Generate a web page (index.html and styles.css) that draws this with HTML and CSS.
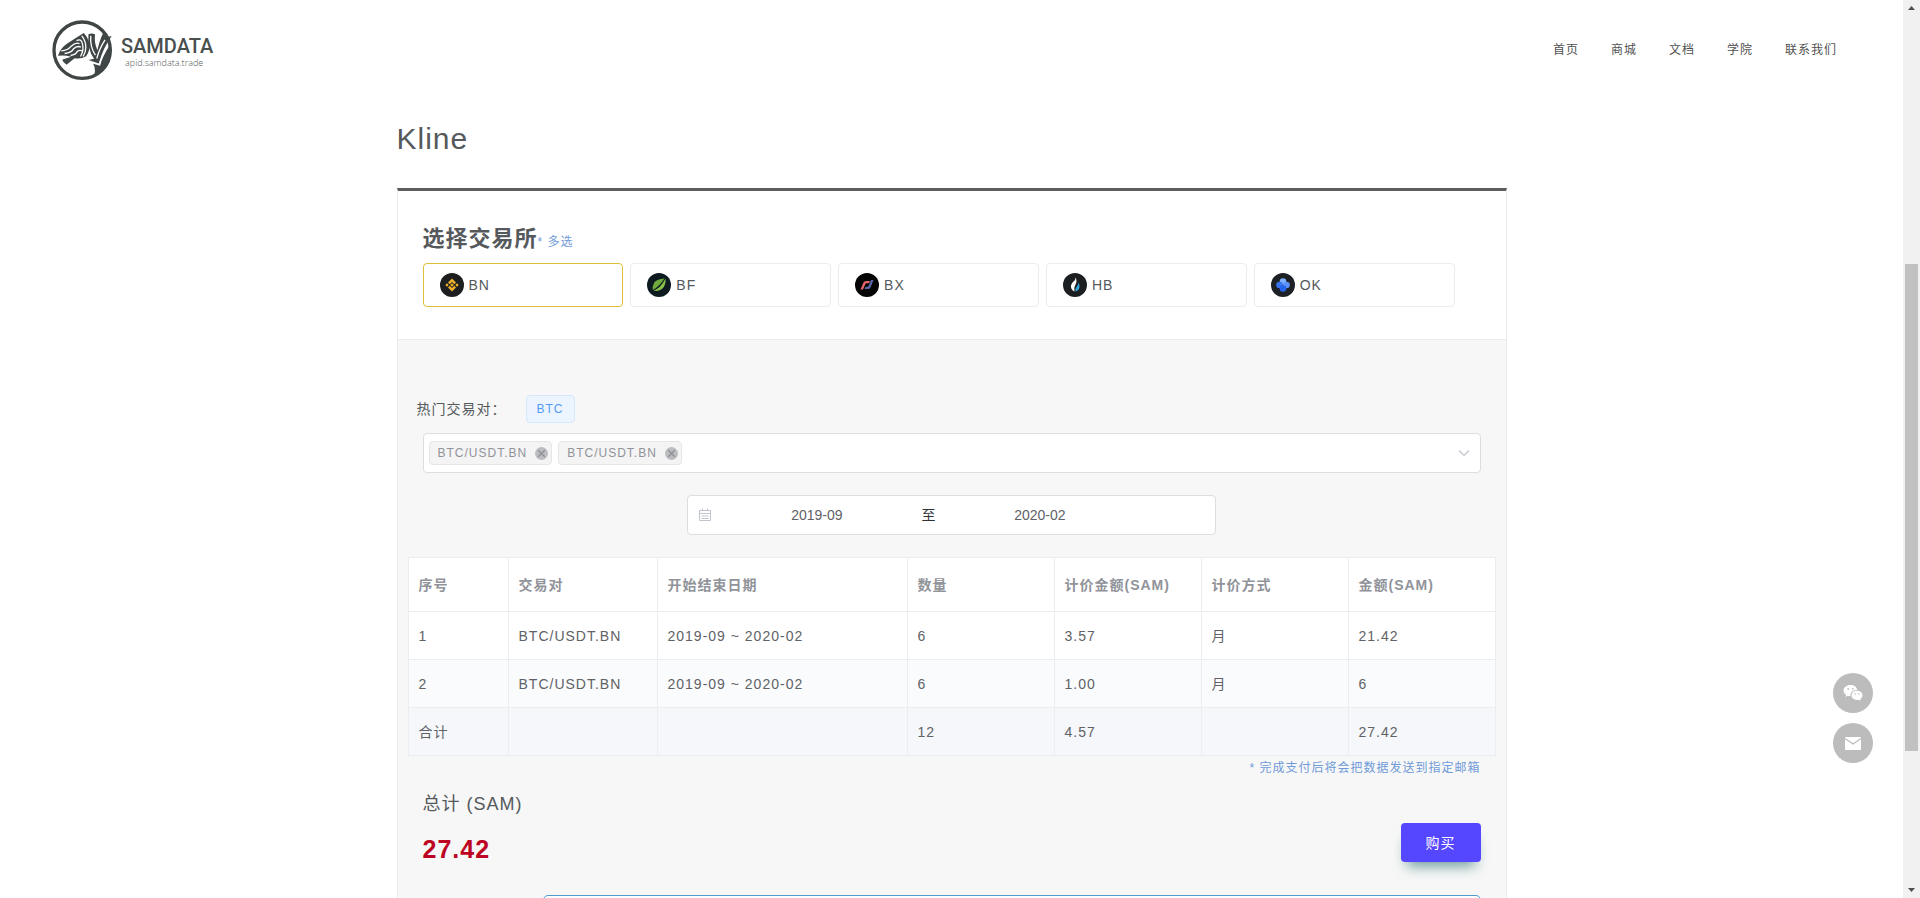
FILE: index.html
```html
<!DOCTYPE html>
<html lang="zh-CN">
<head>
<meta charset="utf-8">
<title>SAMDATA - Kline</title>
<link rel="stylesheet" href="styles.css">
</head>
<body>
<div class="page">
  <header class="site-header">
    <a class="brand" href="#">
      <svg class="brand-mark" viewBox="36 28 184 184" aria-hidden="true">
        <circle cx="127" cy="119" r="85" fill="#fff" stroke="#3f4645" stroke-width="10"/>
        <path fill="#3f4645" d="M54 136 Q62 112 82 99 Q104 84 132 67 Q144 80 148 94 Q152 120 139 137 Q122 147 104 143 L80 163 Q66 152 68 147 L94 139 Q74 133 54 136Z"/>
        <path fill="none" stroke="#fff" stroke-width="4" d="M64 121 Q84 120 94 107 Q108 94 119 99 M74 129 Q96 127 101 115 Q112 104 123 110 M92 135 Q108 133 112 123 Q120 117 127 121 M110 90 Q124 84 127 97 Q134 118 122 138 M126 76 Q138 92 138 110 Q138 126 130 138"/>
        <path fill="#3f4645" d="M146 71 Q157 66 166 72 Q162 96 173 119 Q180 88 190 68 L200 80 L216 76 Q190 112 177 159 L146 149 L163 145 Q142 118 146 71Z"/>
        <path fill="none" stroke="#fff" stroke-width="4" d="M153 76 Q150 110 167 134 M196 88 Q180 112 171 144"/>
        <path fill="#3f4645" d="M160 160 L181 166 Q188 138 213 100 Q222 150 190 182 Q178 194 162 200 Q170 176 160 160Z"/>
      </svg>
      <span class="brand-text">
        <span class="brand-name">SAMDATA</span>
        <span class="brand-url">apid.samdata.trade</span>
      </span>
    </a>
    <nav class="site-nav">
      <a href="#">首页</a>
      <a href="#">商城</a>
      <a href="#">文档</a>
      <a href="#">学院</a>
      <a href="#">联系我们</a>
    </nav>
  </header>

  <main class="container">
    <h1 class="page-title">Kline</h1>
    <div class="card">
      <section class="exchanges">
        <h2 class="section-title">选择交易所<small class="hint">* 多选</small></h2>
        <div class="exchange-list">
          <label class="exchange">
            <input type="checkbox" class="exchange-input" checked>
            <svg class="coin" viewBox="0 0 24 24" aria-hidden="true"><circle cx="12" cy="12" r="12" fill="#1d1e20"/><g fill="#efb02b"><path d="M12 5.500l4 4-1.700 1.700-2.300-2.300-2.300 2.300-1.700-1.700zM12 18.500l4-4-1.700-1.700-2.300 2.300-2.300-2.300-1.700 1.700zM7 10.300l1.700 1.700L7 13.700 5.300 12zM17 10.300l1.700 1.700-1.700 1.700-1.700-1.700zM12 10.200l1.800 1.800-1.800 1.800-1.800-1.800z"/></g></svg>
            <span>BN</span>
          </label>
          <label class="exchange">
            <input type="checkbox" class="exchange-input">
            <svg class="coin" viewBox="0 0 24 24" aria-hidden="true"><circle cx="12" cy="12" r="12" fill="#0d1a20"/><path fill="#8bc34a" d="M18.500 5.500Q19 12 15.500 15.500Q12 19 6.500 17.500Q13.500 15.500 18.500 5.500Z"/><path fill="#6fa83c" d="M17.500 5.500Q9 6 7 10Q5.200 13.500 5.800 17Q12.500 13.500 17.500 5.500Z"/></svg>
            <span>BF</span>
          </label>
          <label class="exchange">
            <input type="checkbox" class="exchange-input">
            <svg class="coin" viewBox="0 0 24 24" aria-hidden="true"><circle cx="12" cy="12" r="12" fill="#050506"/><path fill="#e8666b" d="M5.500 16.500L8.500 9.500Q9.300 8 11 8H15L13.800 10.200H11.500Q10.800 10.200 10.300 11.200L8 16.500Z"/><path fill="#5a67a8" d="M18.500 7L15.500 14.500Q14.800 16 13 16H9.500L10.700 13.800H12.500Q13.200 13.800 13.600 12.800L16 7Z"/></svg>
            <span>BX</span>
          </label>
          <label class="exchange">
            <input type="checkbox" class="exchange-input">
            <svg class="coin" viewBox="0 0 24 24" aria-hidden="true"><circle cx="12" cy="12" r="12" fill="#1c1f22"/><path fill="#fff" d="M12.500 4.500Q14.500 8 12.500 11.500Q10.500 15 11.500 18.500Q7.500 16.500 8 12.500Q8.600 9.500 11 8Q12.500 7 12.500 4.500Z"/><path fill="#2ea7e0" d="M15.500 9.500Q17.500 13.500 15.500 16.500Q14.500 18 12.500 18.500Q12 15.500 13.800 13.500Q15.500 11.500 15.500 9.500Z"/></svg>
            <span>HB</span>
          </label>
          <label class="exchange">
            <input type="checkbox" class="exchange-input">
            <svg class="coin" viewBox="0 0 24 24" aria-hidden="true"><circle cx="12" cy="12" r="12" fill="#1d2024"/><circle cx="12" cy="8.500" r="3.300" fill="#7fb0ff"/><circle cx="8.500" cy="12" r="3.300" fill="#3773ea"/><circle cx="15.500" cy="12" r="3.300" fill="#5b93fa"/><circle cx="12" cy="15.500" r="3.300" fill="#2563eb"/></svg>
            <span>OK</span>
          </label>
        </div>
      </section>

      <section class="order">
        <div class="hot-pairs">
          <span>热门交易对：</span>
          <button type="button" class="hot-tag">BTC</button>
        </div>

        <div class="pair-select">
          <span class="tag">BTC/USDT.BN<button type="button" class="tag-close" aria-label="移除"><svg viewBox="0 0 12 12" aria-hidden="true"><path d="M3 3l6 6M9 3l-6 6" stroke="#8a8c90" fill="none"/></svg></button></span>
          <span class="tag">BTC/USDT.BN<button type="button" class="tag-close" aria-label="移除"><svg viewBox="0 0 12 12" aria-hidden="true"><path d="M3 3l6 6M9 3l-6 6" stroke="#8a8c90" fill="none"/></svg></button></span>
          <select class="pair-field" aria-label="交易对"><option></option></select>
          <svg class="chevron" viewBox="0 0 12 12" aria-hidden="true"><path d="M1 3.500l5 5 5-5" fill="none" stroke="#c0c4cc" stroke-width="1.200"/></svg>
        </div>

        <div class="date-range">
          <svg class="calendar" viewBox="0 0 14 14" aria-hidden="true"><path d="M1.500 2.500h11v10h-11zM1.500 5.500h11M4.500 0.500v2M9.500 0.500v2M3.500 8h7M3.500 10.500h7" fill="none" stroke="#c0c4cc"/></svg>
          <input class="date-input" type="text" value="2019-09" aria-label="开始月份">
          <span class="date-sep">至</span>
          <input class="date-input" type="text" value="2020-02" aria-label="结束月份">
        </div>

        <table class="order-table">
          <colgroup>
            <col class="col-index"><col class="col-pair"><col class="col-dates"><col><col><col><col>
          </colgroup>
          <thead>
            <tr><th>序号</th><th>交易对</th><th>开始结束日期</th><th>数量</th><th>计价金额(SAM)</th><th>计价方式</th><th>金额(SAM)</th></tr>
          </thead>
          <tbody>
            <tr><td>1</td><td>BTC/USDT.BN</td><td>2019-09 ~ 2020-02</td><td>6</td><td>3.57</td><td>月</td><td>21.42</td></tr>
            <tr><td>2</td><td>BTC/USDT.BN</td><td>2019-09 ~ 2020-02</td><td>6</td><td>1.00</td><td>月</td><td>6</td></tr>
          </tbody>
          <tfoot>
            <tr><td>合计</td><td></td><td></td><td>12</td><td>4.57</td><td></td><td>27.42</td></tr>
          </tfoot>
        </table>

        <p class="note">* 完成支付后将会把数据发送到指定邮箱</p>

        <div class="summary">
          <div>
            <div class="total-label">总计 (SAM)</div>
            <div class="total-value">27.42</div>
          </div>
          <button type="button" class="buy">购买</button>
        </div>

        <div class="notice"></div>
      </section>
    </div>
  </main>
</div>

<div class="scrollbar" aria-hidden="true">
  <svg class="arrow" viewBox="0 0 17 17"><path d="M5 10h7L8.500 6z" fill="#505050"/></svg>
  <div class="track"><div class="thumb"></div></div>
  <svg class="arrow" viewBox="0 0 17 17"><path d="M5 7h7L8.500 11z" fill="#505050"/></svg>
</div>

<div class="floating">
  <button type="button" class="float-button" aria-label="微信">
    <svg viewBox="0 0 20 18" aria-hidden="true"><path fill="#fff" d="M7.500 1C3.600 1 .5 3.500.5 6.600c0 1.800 1 3.300 2.600 4.400L2.500 13l2.300-1.200c.8.200 1.500.4 2.700.4-.6-3.700 2.700-6.500 6.800-6.300C13.700 3 10.900 1 7.500 1z"/><path fill="#fff" d="M19.500 11.300c0-2.600-2.500-4.600-5.500-4.600s-5.500 2-5.500 4.600 2.500 4.700 5.500 4.700c.7 0 1.300-.1 1.900-.3l1.900 1-.5-1.600c1.400-1 2.200-2.300 2.200-3.800z"/><g fill="#bcbcbc"><circle cx="5.200" cy="4.800" r=".9"/><circle cx="9.800" cy="4.800" r=".9"/><circle cx="12.200" cy="10" r=".8"/><circle cx="15.900" cy="10" r=".8"/></g></svg>
  </button>
  <button type="button" class="float-button" aria-label="邮箱">
    <svg viewBox="0 0 20 18" aria-hidden="true"><rect x="2" y="3" width="16" height="13" rx="1" fill="#fff"/><path d="M2 4.500l8 5.500 8-5.500" fill="none" stroke="#bcbcbc" stroke-width="1.200"/></svg>
  </button>
</div>
</body>
</html>
```
FILE: styles.css
```css
*, *::before, *::after { box-sizing: border-box; }

body {
  margin: 0;
  display: flex;
  height: 100vh;
  overflow: hidden;
  background: #fff;
  color: #55595c;
  font: 14px/24px "Liberation Sans", "Noto Sans CJK SC", sans-serif;
  letter-spacing: 1px;
}

button, input, select { font: inherit; letter-spacing: inherit; }
button { cursor: pointer; }
h1, h2, p { margin: 0; }
a { color: inherit; text-decoration: none; }

.page { flex: 1; min-width: 0; overflow: hidden; }

.site-header {
  display: flex;
  align-items: center;
  justify-content: space-between;
  height: 100px;
  padding: 0 66px 0 52px;
}
.brand { display: flex; align-items: center; gap: 8px; color: #4a4f50; letter-spacing: 0; }
.brand-mark { width: 61px; height: 61px; }
.brand-text { display: flex; flex-direction: column; padding-top: 4px; }
.brand-name { font: 500 20px/22px "Roboto", sans-serif; }
.brand-url { padding-left: 4px; font: 300 9px/12px "Open Sans", sans-serif; color: #55595a; }
.site-nav { display: flex; gap: 32px; font-size: 12px; color: #505050; }

.container { width: 1110px; max-width: 100%; margin: 0 auto; }
.page-title { padding: 18px 0 28px; font-size: 30px; line-height: 42px; font-weight: 400; }

.card { border: 1px solid #ececec; border-top: 3px solid #5e5c5d; }
.exchanges { padding: 30px 25px 32px; border-bottom: 1px solid #ececec; }
.section-title { display: flex; align-items: baseline; font-size: 22px; line-height: 36px; font-weight: 700; margin-bottom: 3px; }
.hint { font-size: 12px; font-weight: 400; color: #6f9ad8; }

.exchange-list { display: grid; grid-template-columns: repeat(5, 1fr); gap: 7px; padding-right: 26px; }
.exchange {
  display: flex;
  align-items: center;
  gap: 5px;
  height: 44px;
  padding: 0 16px;
  border: 1px solid #ececec;
  border-radius: 4px;
  cursor: pointer;
}
.exchange:has(:checked) { border-color: #e0bf36; }
.exchange-input { position: absolute; opacity: 0; }
.coin { width: 24px; height: 24px; }

.order { background: #f7f7f7; padding: 55px 10px 40px; }
.hot-pairs { display: flex; align-items: center; gap: 19px; padding-left: 9px; margin-bottom: 10px; }
.hot-tag {
  height: 28px;
  padding: 0 10px;
  border: 1px solid #d5e8fb;
  border-radius: 4px;
  background: #ecf5ff;
  color: #539bf0;
  font-size: 12px;
}

.pair-select {
  display: flex;
  align-items: center;
  gap: 6px;
  height: 40px;
  margin: 0 15px 22px;
  padding: 0 10px 0 5px;
  border: 1px solid #dcdee2;
  border-radius: 4px;
  background: #fff;
}
.tag {
  display: flex;
  align-items: center;
  gap: 8px;
  height: 24px;
  padding: 0 3px 0 8px;
  border: 1px solid #e6e6e8;
  border-radius: 4px;
  background: #f4f4f5;
  color: #909399;
  font-size: 12px;
}
.tag-close { display: flex; width: 13px; height: 13px; padding: 0; border: 0; border-radius: 50%; background: #bbbdc0; }
.tag-close svg { width: 13px; height: 13px; }
.pair-field { flex: 1; min-width: 0; height: 30px; border: 0; background: none; appearance: none; outline: 0; }
.chevron { width: 12px; height: 12px; }

.date-range {
  display: flex;
  align-items: center;
  width: 50%;
  max-width: 529px;
  height: 40px;
  margin: 0 auto 22px;
  padding: 0 10px;
  border: 1px solid #dcdee2;
  border-radius: 4px;
  background: #fff;
  letter-spacing: 0;
}
.calendar { width: 14px; height: 14px; margin-right: 6px; }
.date-input { width: 39%; min-width: 0; padding: 0; border: 0; background: none; color: #606266; text-align: center; outline: 0; }
.date-sep { width: 5%; color: #303133; text-align: center; }

.order-table {
  width: 100%;
  table-layout: fixed;
  border-collapse: collapse;
  background: #fff;
  color: #606266;
}
.col-index { width: 100px; }
.col-pair { width: 149px; }
.col-dates { width: 250px; }
.order-table th, .order-table td { height: 48px; padding: 0 10px; border: 1px solid #ebeef0; text-align: left; }
.order-table th { height: 54px; color: #909399; font-weight: 700; }
.order-table tbody tr:nth-child(even) { background: #fafbfd; }
.order-table tfoot { background: #f5f7fa; }

.note { padding-right: 15px; text-align: right; font-size: 12px; color: #6f9ad8; }

.summary { display: flex; align-items: flex-end; justify-content: space-between; padding: 10px 15px 26px; }
.total-label { font-size: 18px; line-height: 28px; }
.total-value { margin-top: 11px; font-size: 25px; line-height: 40px; font-weight: 700; color: #bd0422; }
.buy {
  width: 80px;
  height: 39px;
  margin-bottom: 7px;
  padding: 0;
  border: 0;
  border-radius: 4px;
  background: #5546ff;
  color: #fff;
  box-shadow: 0 10px 14px -6px rgba(10, 90, 90, 0.6);
}
.notice { height: 60px; margin: 0 15px 0 135px; border: 1px solid #4f9bd0; border-radius: 5px; background: #fff; }

.scrollbar { display: flex; flex-direction: column; width: 17px; background: #f1f1f1; }
.arrow { width: 17px; height: 17px; }
.track { flex: 1; padding: 0 2px; }
.track::before { content: ""; display: block; height: 28.6%; }
.thumb { height: 56.4%; background: #c1c1c1; }

.floating { position: fixed; right: 47px; bottom: 135px; display: grid; gap: 10px; }
.float-button {
  display: grid;
  place-items: center;
  width: 40px;
  height: 40px;
  padding: 0;
  border: 0;
  border-radius: 50%;
  background: #bcbcbc;
}
.float-button svg { width: 20px; height: 18px; }
```
